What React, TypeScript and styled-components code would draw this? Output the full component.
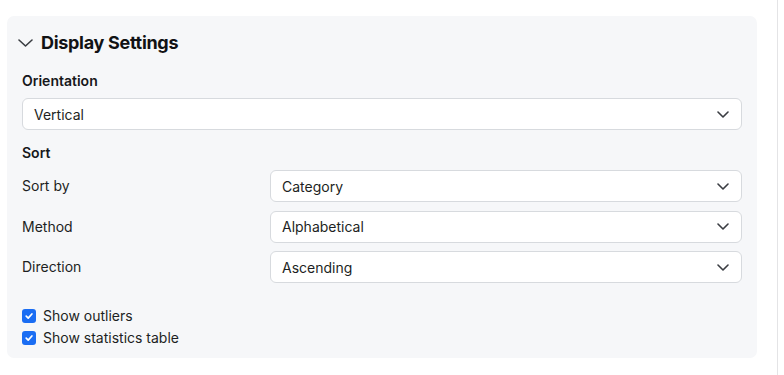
import React, { useState } from 'react';
import styled, { createGlobalStyle } from 'styled-components';

const GlobalStyle = createGlobalStyle`
  body {
    margin: 0;
    background: #ffffff;
    font-family: Inter, "Noto Sans", "Liberation Sans", sans-serif;
    color: #1d1f23;
  }
`;

const Chevron = ({ w, h }: { w: number; h: number }) => (
  <svg width={w} height={h} viewBox={`0 0 ${w} ${h}`} fill="none">
    <polyline
      points={`1,1 ${w / 2},${h - 1} ${w - 1},1`}
      stroke="#3a3d42"
      strokeWidth="1.6"
      strokeLinecap="round"
      strokeLinejoin="round"
    />
  </svg>
);

const Check = () => (
  <svg width="10" height="10" viewBox="0 0 10 10" fill="none">
    <polyline
      points="2.2,5.2 4.2,7.1 7.9,3"
      stroke="#ffffff"
      strokeWidth="1.7"
      strokeLinecap="round"
      strokeLinejoin="round"
    />
  </svg>
);

const Select = ({ value }: { value: string }) => (
  <SelectBox>
    <span>{value}</span>
    <Chevron w={12} h={7} />
  </SelectBox>
);

const App = () => {
  const [options, setOptions] = useState({ outliers: true, stats: true });

  const toggle = (key: 'outliers' | 'stats') => {
    setOptions({ ...options, [key]: !options[key] });
  };

  return (
    <Page>
      <GlobalStyle />
      <Panel>
        <Header>
          <Chevron w={15} h={8} />
          <Title>Display Settings</Title>
        </Header>

        <Section $top={16}>
          <Label>Orientation</Label>
          <Select value="Vertical" />
        </Section>

        <Section $top={13}>
          <Label>Sort</Label>
          <SortGrid>
            <RowLabel>Sort by</RowLabel>
            <Select value="Category" />
            <RowLabel>Method</RowLabel>
            <Select value="Alphabetical" />
            <RowLabel>Direction</RowLabel>
            <Select value="Ascending" />
          </SortGrid>
        </Section>

        <Checks>
          <CheckRow onClick={() => toggle('outliers')}>
            <Box $on={options.outliers}>{options.outliers && <Check />}</Box>
            Show outliers
          </CheckRow>
          <CheckRow onClick={() => toggle('stats')}>
            <Box $on={options.stats}>{options.stats && <Check />}</Box>
            Show statistics table
          </CheckRow>
        </Checks>
      </Panel>
    </Page>
  );
};

export default App;

const Page = styled.div`
  box-sizing: border-box;
  width: 778px;
  height: 375px;
  padding: 16px 0 0 7px;
  border-right: 1px solid #e4e4e6;
`;

const Panel = styled.div`
  box-sizing: border-box;
  width: 750px;
  background: #f6f7f9;
  border-radius: 7px;
  padding: 15px 15px 10px 15px;
`;

const Header = styled.div`
  display: flex;
  align-items: center;
  gap: 8px;
  height: 24px;
  margin-left: -4px;
`;

const Title = styled.h2`
  margin: 0;
  font-size: 18px;
  font-weight: 700;
  line-height: 24px;
  color: #111214;
  letter-spacing: -0.3px;
`;

const Section = styled.div<{ $top: number }>`
  display: flex;
  flex-direction: column;
  gap: 7px;
  margin-top: ${({ $top }) => $top}px;
`;

const Label = styled.div`
  font-size: 14px;
  font-weight: 600;
  line-height: 20px;
  color: #16181b;
`;

const SelectBox = styled.div`
  box-sizing: border-box;
  height: 32px;
  display: flex;
  align-items: center;
  justify-content: space-between;
  padding: 0 12px 0 11px;
  background: #ffffff;
  border: 1px solid #d7dade;
  border-radius: 6px;
  font-size: 14px;
  color: #1d1f23;
`;

const SortGrid = styled.div`
  display: grid;
  grid-template-columns: 1fr 2fr;
  column-gap: 12px;
  row-gap: 8.5px;
  align-items: center;
`;

const RowLabel = styled.div`
  font-size: 14px;
  line-height: 20px;
  color: #1d1f23;
`;

const Checks = styled.div`
  display: flex;
  flex-direction: column;
  gap: 2px;
  margin-top: 23px;
`;

const CheckRow = styled.label`
  display: flex;
  align-items: center;
  gap: 7px;
  font-size: 14px;
  line-height: 20px;
  color: #1d1f23;
  cursor: pointer;
`;

const Box = styled.span<{ $on: boolean }>`
  width: 14px;
  height: 14px;
  border-radius: 3px;
  display: flex;
  align-items: center;
  justify-content: center;
  background: ${({ $on }) => ($on ? '#1a6df3' : '#ffffff')};
  border: ${({ $on }) => ($on ? 'none' : '1px solid #9aa0a6')};
  box-sizing: border-box;
`;
